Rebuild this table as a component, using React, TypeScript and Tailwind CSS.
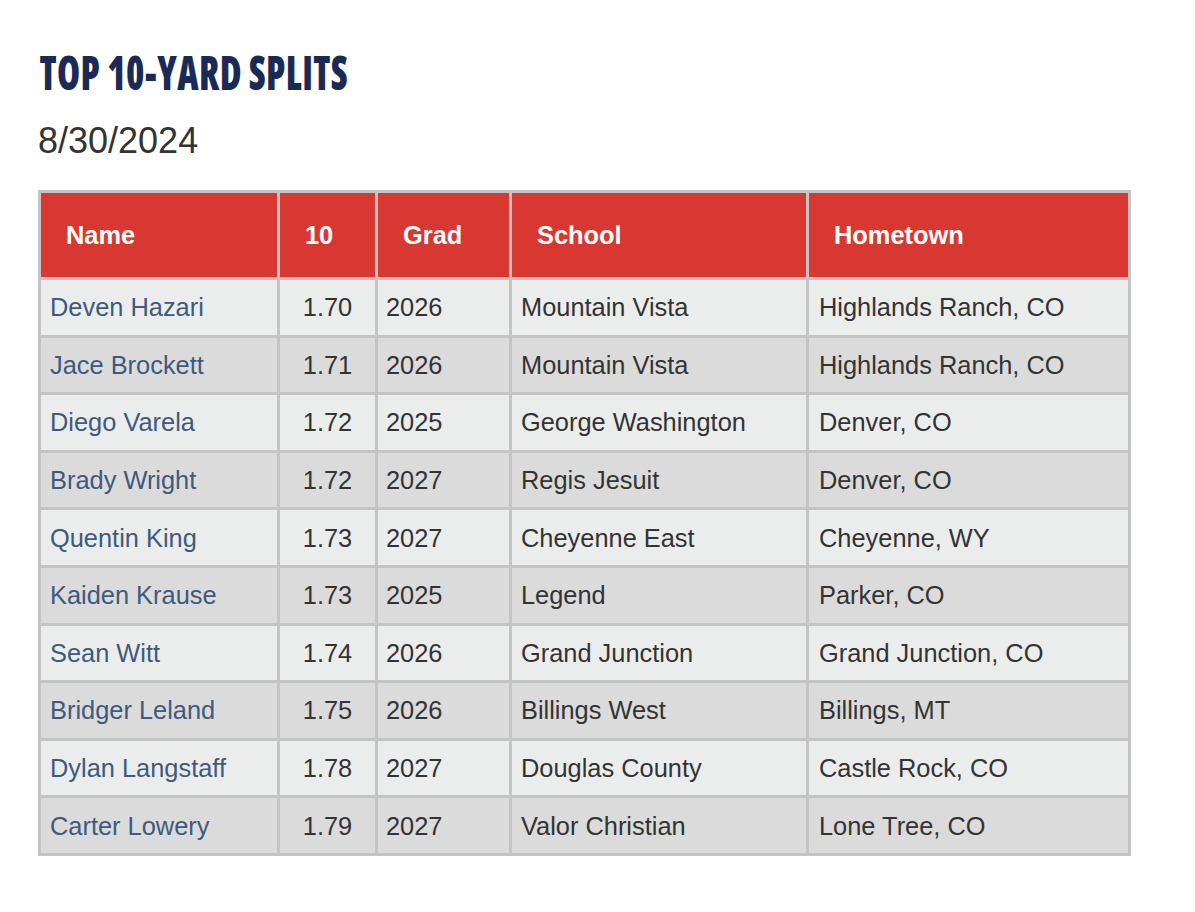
const rows = [
  ["Deven Hazari", "1.70", "2026", "Mountain Vista", "Highlands Ranch, CO"],
  ["Jace Brockett", "1.71", "2026", "Mountain Vista", "Highlands Ranch, CO"],
  ["Diego Varela", "1.72", "2025", "George Washington", "Denver, CO"],
  ["Brady Wright", "1.72", "2027", "Regis Jesuit", "Denver, CO"],
  ["Quentin King", "1.73", "2027", "Cheyenne East", "Cheyenne, WY"],
  ["Kaiden Krause", "1.73", "2025", "Legend", "Parker, CO"],
  ["Sean Witt", "1.74", "2026", "Grand Junction", "Grand Junction, CO"],
  ["Bridger Leland", "1.75", "2026", "Billings West", "Billings, MT"],
  ["Dylan Langstaff", "1.78", "2027", "Douglas County", "Castle Rock, CO"],
  ["Carter Lowery", "1.79", "2027", "Valor Christian", "Lone Tree, CO"],
];

const headers = ["Name", "10", "Grad", "School", "Hometown"];

export default function App() {
  return (
    <div className="min-h-screen bg-white pl-[38px] pt-[44px] [font-family:'Liberation_Sans',Arial,sans-serif]">
      <h1 className="origin-left scale-x-[0.775] text-[48px] font-extrabold leading-[56px] tracking-[0.5px] text-[#1b2a55] [font-family:'Open_Sans',sans-serif] [font-stretch:75%] whitespace-nowrap pl-[2px]">
        TOP 10-YARD SPLITS
      </h1>
      <p className="mt-[21px] text-[36px] leading-[40px] text-[#333333]">8/30/2024</p>

      <table className="mt-[29px] table-fixed border-separate border-spacing-[3px] bg-[#c4c4c4] w-[1093px]">
        <colgroup>
          <col className="w-[236px]" />
          <col className="w-[95px]" />
          <col className="w-[131px]" />
          <col className="w-[294px]" />
          <col className="w-[319px]" />
        </colgroup>
        <thead>
          <tr>
            {headers.map((h) => (
              <th
                key={h}
                className="h-[84px] bg-[#d93832] px-[25px] text-left align-middle text-[25.4px] font-bold text-white"
              >
                {h}
              </th>
            ))}
          </tr>
        </thead>
        <tbody>
          {rows.map((r, i) => (
            <tr key={r[0]} className={i % 2 === 0 ? "bg-[#ebeded]" : "bg-[#dbdbdb]"}>
              <td className="h-[54.6px] px-[9px] text-[25.4px] text-[#3d5a7e]">{r[0]}</td>
              <td className="h-[54.6px] px-[9px] text-center text-[25.4px] text-[#333333]">{r[1]}</td>
              <td className="h-[54.6px] px-[8px] text-[25.4px] text-[#333333]">{r[2]}</td>
              <td className="h-[54.6px] px-[9px] text-[25.4px] text-[#333333]">{r[3]}</td>
              <td className="h-[54.6px] px-[10px] text-[25.4px] text-[#333333]">{r[4]}</td>
            </tr>
          ))}
        </tbody>
      </table>
    </div>
  );
}
